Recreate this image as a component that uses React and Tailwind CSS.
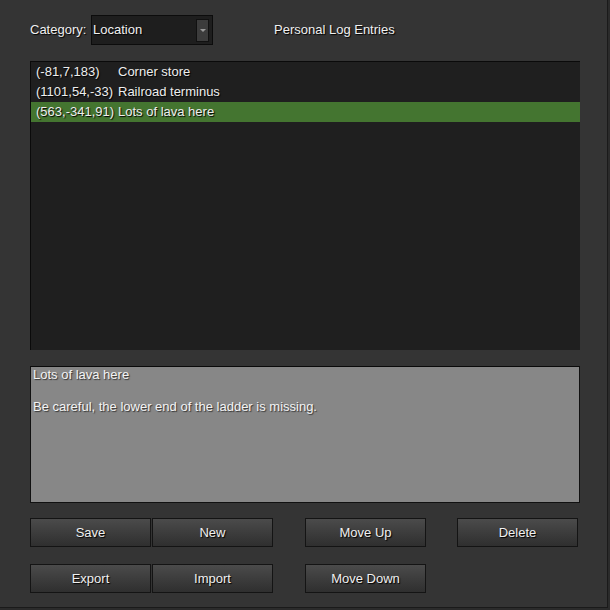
import React from "react";

const entries = [
  { pos: "(-81,7,183)", name: "Corner store" },
  { pos: "(1101,54,-33)", name: "Railroad terminus" },
  { pos: "(563,-341,91)", name: "Lots of lava here", selected: true },
];

function Btn({ label }) {
  return (
    <button className="w-[121px] h-[29px] border border-[#141414] bg-gradient-to-b from-[#4b4b4b] to-[#2f2f2f] text-[13px] text-[#f0f0f0] [text-shadow:1px_1px_1px_#000]">
      {label}
    </button>
  );
}

export default function App() {
  return (
    <div className="w-[610px] h-[610px] bg-[#2b2b2b] font-['Liberation_Sans',Arial,sans-serif]">
      <div className="w-[608px] h-[608px] bg-[#343434] border-r border-b border-[#1a1a1a] flex flex-col pl-[30px] pt-[15px]">
        {/* header */}
        <div className="flex items-center h-[30px] text-[13px] text-[#f0f0f0] [text-shadow:1px_1px_1px_#000]">
          <span className="w-[61px]">Category:</span>
          <div className="w-[122px] h-[30px] bg-[#1e1e1e] border border-[#0c0c0c] flex items-center justify-between pl-[1px] pr-[3px]">
            <span>Location</span>
            <div className="w-[13px] h-[23px] bg-[#3c3c3c] border border-[#111] flex items-center justify-center">
              <div className="w-0 h-0 border-l-[3px] border-r-[3px] border-t-[3px] border-l-transparent border-r-transparent border-t-[#999]" />
            </div>
          </div>
          <span className="ml-[61px]">Personal Log Entries</span>
        </div>

        {/* list */}
        <div className="mt-[16px] w-[550px] h-[289px] bg-[#1f1f1f] border-t border-l border-[#0a0a0a] text-[13px] text-[#eeeeee] [text-shadow:1px_1px_1px_#000]">
          {entries.map((e) => (
            <div
              key={e.pos}
              className={`flex items-center h-[20px] pl-[5px] ${e.selected ? "bg-[#447530]" : ""}`}
            >
              <span className="w-[82px]">{e.pos}</span>
              <span>{e.name}</span>
            </div>
          ))}
        </div>

        {/* notes */}
        <div className="mt-[16px] w-[550px] h-[137px] bg-[#878787] border border-[#111] border-t-[#0a0a0a] px-[2px] text-[13px] leading-[15px] text-[#f4f4f4] [text-shadow:1px_1px_1px_#333]">
          <div>Lots of lava here</div>
          <div className="mt-[17px]">Be careful, the lower end of the ladder is missing.</div>
        </div>

        {/* buttons */}
        <div className="mt-[15px] flex">
          <Btn label="Save" />
          <div className="ml-[1px]"><Btn label="New" /></div>
          <div className="ml-[32px]"><Btn label="Move Up" /></div>
          <div className="ml-[31px]"><Btn label="Delete" /></div>
        </div>
        <div className="mt-[17px] flex">
          <Btn label="Export" />
          <div className="ml-[1px]"><Btn label="Import" /></div>
          <div className="ml-[32px]"><Btn label="Move Down" /></div>
        </div>
      </div>
    </div>
  );
}
